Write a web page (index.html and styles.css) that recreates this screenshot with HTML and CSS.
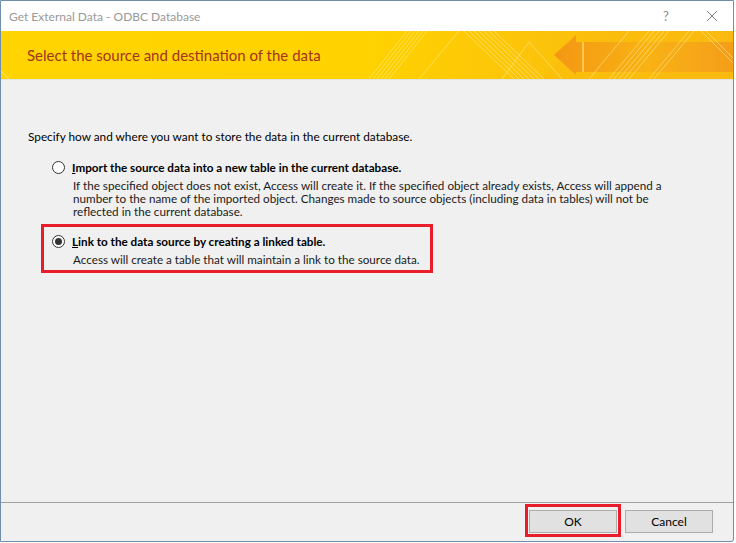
FILE: index.html
```html
<!DOCTYPE html>
<html lang="en">
<head>
<meta charset="utf-8">
<title>Get External Data - ODBC Database</title>
<link rel="stylesheet" href="styles.css">
</head>
<body>
<div class="dialog">
  <div class="titlebar">
    <span class="title">Get External Data - ODBC Database</span>
    <div class="controls">
      <span class="help">?</span>
      <svg class="close" width="12" height="12" viewBox="0 0 12 12"><path d="M1 1 L11 11 M11 1 L1 11" stroke="#808080" stroke-width="1" fill="none"/></svg>
    </div>
  </div>
  <div class="banner">
    <svg class="banner-art" width="733" height="48" viewBox="0 0 733 48" preserveAspectRatio="none">
      <defs>
        <linearGradient id="bg" x1="0" y1="0" x2="1" y2="0">
          <stop offset="0" stop-color="#ffd400"/>
          <stop offset="0.5" stop-color="#ffd200"/>
          <stop offset="0.72" stop-color="#fcc40a"/>
          <stop offset="1" stop-color="#f9b713"/>
        </linearGradient>
        <linearGradient id="bar" x1="0" y1="0" x2="1" y2="0">
          <stop offset="0" stop-color="#f6a51c" stop-opacity="0.5"/>
          <stop offset="1" stop-color="#f39a1a" stop-opacity="0.9"/>
        </linearGradient>
        <linearGradient id="arrow" x1="0" y1="0" x2="1" y2="0">
          <stop offset="0" stop-color="#f28f16"/>
          <stop offset="1" stop-color="#f8b214"/>
        </linearGradient>
      </defs>
      <rect width="733" height="48" fill="url(#bg)"/>
      <polygon points="540,48 590,0 733,0 733,48" fill="#fbbc0c" opacity="0.5"/>
      <polygon points="650,11 733,11 733,41 650,41" fill="url(#bar)"/>
      <polygon points="553,24 575,4 575,11 650,11 650,41 575,41 575,44" fill="url(#arrow)" opacity="0.85"/>
      <g stroke="#fff3a8" stroke-width="1" opacity="0.5" fill="none">
        <path d="M368 48 L406 0 M372 48 L410 0 M376 48 L414 0 M380 48 L418 0 M384 48 L422 0 M388 48 L426 0"/>
        <path d="M418 48 L458 0"/>
        <path d="M463 0 L513 48 M468 0 L518 48 M473 0 L523 48 M478 0 L528 48 M483 0 L533 48 M488 0 L538 48 M493 0 L543 48"/>
        <path d="M501 48 L528 11 L561 48"/>
        <path d="M588 48 L628 0"/>
        <path d="M608 48 L648 0 M613 48 L653 0 M618 48 L658 0 M623 48 L663 0 M628 48 L668 0"/>
        <path d="M648 48 L688 0 M653 48 L693 0"/>
        <path d="M700 0 L733 33 M705 0 L733 28"/>
      </g>
      <path d="M582 11 L582 41" stroke="#ffd86a" stroke-width="2" opacity="0.7"/>
      <path d="M0 40 L8 48" stroke="#fff3a8" stroke-width="1" opacity="0.6"/>
    </svg>
    <h1 class="banner-title">Select the source and destination of the data</h1>
  </div>
  <div class="content">
    <p class="intro">Specify how and where you want to store the data in the current database.</p>
    <div class="options">
      <div class="option">
        <span class="radio"></span>
        <div class="option-text">
          <div class="option-label"><u>I</u>mport the source data into a new table in the current database.</div>
          <div class="option-desc">If the specified object does not exist, Access will create it. If the specified object already exists, Access will append a<br>number to the name of the imported object. Changes made to source objects (including data in tables) will not be<br>reflected in the current database.</div>
        </div>
      </div>
      <div class="option option-highlight">
        <span class="radio radio-checked"></span>
        <div class="option-text">
          <div class="option-label"><u>L</u>ink to the data source by creating a linked table.</div>
          <div class="option-desc">Access will create a table that will maintain a link to the source data.</div>
        </div>
      </div>
    </div>
  </div>
  <div class="footer">
    <div class="btn-wrap btn-wrap-highlight"><button class="btn">OK</button></div>
    <div class="btn-wrap"><button class="btn">Cancel</button></div>
  </div>
</div>
</body>
</html>
```
FILE: styles.css
```css
* { box-sizing: border-box; }
html, body {
  margin: 0;
  padding: 0;
  background: #ffffff;
}
body {
  font-family: "Lato", "Liberation Sans", sans-serif;
  font-size: 12px;
  color: #000;
}
.dialog {
  width: 734px;
  height: 542px;
  border: 1px solid #6f8faf;
  background: #f0f0f0;
  display: flex;
  flex-direction: column;
  border-bottom-right-radius: 3px;
}
.titlebar {
  height: 30px;
  background: #ffffff;
  display: flex;
  align-items: center;
  justify-content: space-between;
  padding-left: 8px;
}
.title {
  color: #999999;
  font-size: 12px;
}
.controls {
  display: flex;
  align-items: center;
  height: 100%;
}
.help {
  color: #8a8a8a;
  font-size: 13px;
  width: 12px;
  text-align: center;
  margin-right: 34px;
}
.close {
  display: block;
  margin-right: 15px;
}
.banner {
  position: relative;
  height: 49px;
  border-bottom: 1px solid #e4e4e4;
  display: flex;
  align-items: center;
  padding-left: 26px;
  overflow: hidden;
}
.banner-art {
  position: absolute;
  left: 0;
  top: 0;
  display: block;
}
.banner-title {
  position: relative;
  margin: 0;
  font-weight: normal;
  font-size: 15px;
  color: #a3341e;
  padding-bottom: 1px;
}
.content {
  flex: 1;
  padding: 49px 0 0 27px;
}
.intro {
  margin: 0 0 5px 0;
  line-height: 16px;
  font-size: 11.8px;
}
.options {
  display: flex;
  flex-direction: column;
  margin-left: 13px;
}
.option {
  display: flex;
  align-items: flex-start;
  gap: 7px;
  border: 3px solid transparent;
  padding: 6px 8px 4px 8px;
  width: 392px;
  overflow: visible;
  white-space: nowrap;
}
.radio {
  flex: none;
  width: 13px;
  height: 13px;
  margin-top: 2px;
  border: 1px solid #333333;
  border-radius: 50%;
  background: #ffffff;
  display: flex;
  align-items: center;
  justify-content: center;
}
.radio-checked::after {
  content: "";
  width: 7px;
  height: 7px;
  border-radius: 50%;
  background: #333333;
}
.option-label {
  font-weight: bold;
  font-size: 11.7px;
  line-height: 16px;
}
.option-desc {
  margin-top: 4px;
  font-size: 11.7px;
  line-height: 13px;
  color: #1a1a1a;
  padding-left: 1px;
}
.option-highlight {
  border-color: #e81c2a;
  margin-top: -1px;
}
.footer {
  height: 39px;
  border-top: 1px solid #a0a0a0;
  display: flex;
  justify-content: flex-end;
  align-items: flex-start;
  padding: 7px 20px 0 0;
  gap: 11px;
}
.btn-wrap {
  border: 3px solid transparent;
  margin: -3px -3px 0 -3px;
  padding: 0;
}
.btn-wrap + .btn-wrap {
  margin-left: -6px;
}
.btn-wrap-highlight {
  border-color: #e81c2a;
  padding: 3px 1px 1px 1px;
  margin: -6px -4px 0 -4px;
}
.btn {
  display: block;
  width: 88px;
  height: 23px;
  background: #e1e1e1;
  border: 1px solid #adadad;
  font-family: "Lato", "Liberation Sans", sans-serif;
  font-size: 12px;
  color: #000;
  padding: 0;
}
```
